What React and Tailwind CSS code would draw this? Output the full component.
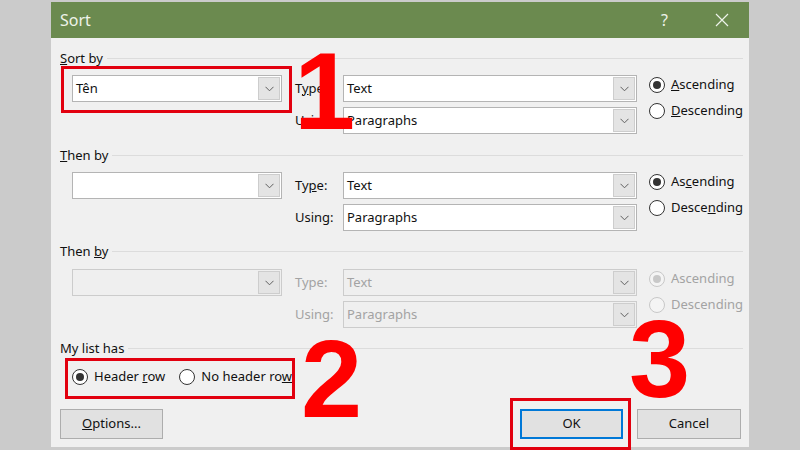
import React from 'react';

const ui = { fontFamily: '"Segoe UI", "Noto Sans", "Liberation Sans", sans-serif' };
const big = { fontFamily: '"Liberation Sans", Arial, sans-serif' };

const Chevron = ({ color = '#606060' }) => (
  <svg width="9" height="6" viewBox="0 0 9 6" fill="none">
    <path d="M0.5 0.8 L4.5 4.8 L8.5 0.8" stroke={color} strokeWidth="1" />
  </svg>
);

const Combo = ({ value, width, disabled }) => (
  <div
    className={`flex h-[27px] border ${disabled ? 'border-[#cccccc] bg-[#efefef]' : 'border-[#b4b4b4] bg-white'}`}
    style={{ width }}
  >
    <div className={`flex-1 flex items-center pl-[3px] text-[13px] ${disabled ? 'text-[#a3a3a3]' : 'text-[#111]'}`}>
      {value}
    </div>
    <div className="w-[22px] m-px flex items-center justify-center bg-[#e4e4e4] border border-[#cdcdcd]">
      <Chevron />
    </div>
  </div>
);

const Radio = ({ checked, disabled, children }) => (
  <div className="flex items-center h-[20px] gap-[6px]">
    <div
      className={`w-[16px] h-[16px] rounded-full border flex items-center justify-center ${
        disabled ? 'border-[#c8c8c8] bg-[#f4f4f4]' : 'border-[#333] bg-white'
      }`}
    >
      {checked && <div className={`w-[8px] h-[8px] rounded-full ${disabled ? 'bg-[#c8c8c8]' : 'bg-[#333]'}`} />}
    </div>
    <span className={`text-[13px] ${disabled ? 'text-[#a3a3a3]' : 'text-[#111]'}`}>{children}</span>
  </div>
);

const GroupHead = ({ children, className = '' }) => (
  <div className={`flex items-center h-[16px] pl-[9px] pr-[6px] gap-[4px] ${className}`}>
    <span className="text-[13px] text-[#111] leading-none">{children}</span>
    <div className="flex-1 h-px bg-[#dcdcdc]" />
  </div>
);

const SortRow = ({ field, typeKey, usingKey, ascKey, descKey, disabled, className = '' }) => {
  const lbl = disabled ? 'text-[#a3a3a3]' : 'text-[#111]';
  return (
    <div className={`flex pl-[21px] ${className}`}>
      <Combo value={field} width="210px" disabled={disabled} />
      <div className={`ml-[13px] w-[48px] flex flex-col gap-[5px] text-[13px] ${lbl}`}>
        <div className="h-[27px] flex items-center">{typeKey}</div>
        <div className="h-[27px] flex items-center">{usingKey}</div>
      </div>
      <div className="flex flex-col gap-[5px]">
        <Combo value="Text" width="294px" disabled={disabled} />
        <Combo value="Paragraphs" width="294px" disabled={disabled} />
      </div>
      <div className="ml-[12px] flex flex-col gap-[6px]">
        <Radio checked disabled={disabled}>{ascKey}</Radio>
        <Radio disabled={disabled}>{descKey}</Radio>
      </div>
    </div>
  );
};

export default function App() {
  return (
    <div className="w-[800px] h-[450px] bg-[#cbcbcb] pl-[51px] pt-[2px] overflow-hidden" style={ui}>
      <div className="relative w-[698px] h-[445px] bg-[#f0f0f0] flex flex-col">
        {/* title bar */}
        <div className="h-[36px] bg-[#6b8a4f] flex items-center pl-[9px] pr-[20px] text-[#eef3ea]">
          <span className="text-[16px] flex-1">Sort</span>
          <span className="text-[16px] mr-[47px]">?</span>
          <svg width="14" height="14" viewBox="0 0 14 14">
            <path d="M1 1 L13 13 M13 1 L1 13" stroke="#eef3ea" strokeWidth="1.2" />
          </svg>
        </div>

        <GroupHead className="mt-[12px]"><u>S</u>ort by</GroupHead>
        <SortRow
          className="mt-[9px]"
          field="Tên"
          typeKey={<span>T<u>y</u>pe:</span>}
          usingKey={<span>Using:</span>}
          ascKey={<span><u>A</u>scending</span>}
          descKey={<span><u>D</u>escending</span>}
        />

        <GroupHead className="mt-[13px]"><u>T</u>hen by</GroupHead>
        <SortRow
          className="mt-[9px]"
          field=""
          typeKey={<span>Ty<u>p</u>e:</span>}
          usingKey={<span>Using:</span>}
          ascKey={<span>As<u>c</u>ending</span>}
          descKey={<span>Desce<u>n</u>ding</span>}
        />

        <GroupHead className="mt-[12px]">Then <u>b</u>y</GroupHead>
        <SortRow
          className="mt-[10px]"
          field=""
          disabled
          typeKey={<span>Type:</span>}
          usingKey={<span>Using:</span>}
          ascKey={<span>Ascending</span>}
          descKey={<span>Descending</span>}
        />

        <GroupHead className="mt-[12px]">My list has</GroupHead>
        <div className="mt-[11px] pl-[21px] flex gap-[14px]">
          <Radio checked>Header <u>r</u>ow</Radio>
          <Radio>No header ro<u>w</u></Radio>
        </div>

        <div className="mt-[22px] flex px-[8px] pl-[9px]">
          <button className="w-[103px] h-[30px] border border-[#adadad] bg-[#e1e1e1] text-[13px] text-[#111]">
            <u>O</u>ptions...
          </button>
          <div className="flex-1" />
          <button className="w-[103px] h-[30px] border-2 border-[#0078d7] bg-[#e1e1e1] text-[13px] text-[#111]">
            OK
          </button>
          <button className="ml-[14px] w-[104px] h-[30px] border border-[#adadad] bg-[#e1e1e1] text-[13px] text-[#111]">
            Cancel
          </button>
        </div>

        {/* red annotations */}
        <div className="absolute left-[10px] top-[64px] w-[231px] h-[47px] border-[3px] border-[#e2000f]" />
        <div className="absolute left-[14px] top-[356px] w-[230px] h-[41px] border-[3px] border-[#e2000f]" />
        <div className="absolute left-[459px] top-[396px] w-[121px] h-[52px] border-[3px] border-[#e2000f]" />
        <span className="absolute left-[243px] top-[34px] text-[110px] font-bold leading-none text-[#ff0000]" style={big}>1</span>
        <span className="absolute left-[250px] top-[322px] text-[110px] font-bold leading-none text-[#ff0000]" style={big}>2</span>
        <span className="absolute left-[578px] top-[302px] text-[110px] font-bold leading-none text-[#ff0000]" style={big}>3</span>
      </div>
    </div>
  );
}
